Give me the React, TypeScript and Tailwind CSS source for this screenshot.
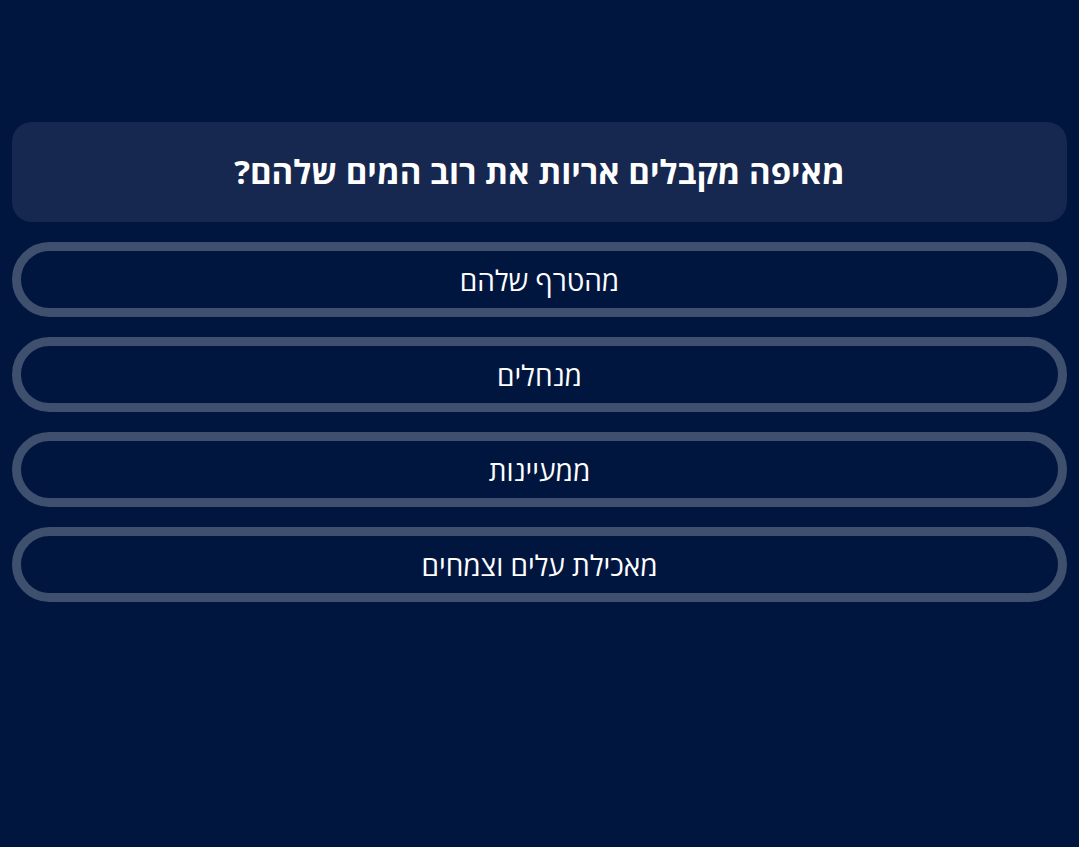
const question = "מאיפה מקבלים אריות את רוב המים שלהם?";

const answers = ["מהטרף שלהם", "מנחלים", "ממעיינות", "מאכילת עלים וצמחים"];

export default function App() {
  return (
    <div
      dir="rtl"
      className="min-h-screen bg-[#01163f] px-3 pt-[122px] text-white"
      style={{ fontFamily: '"Open Sans", "Noto Sans", sans-serif' }}
    >
      <div className="flex h-[100px] items-center justify-center rounded-[20px] bg-[#16284f]">
        <h1 className="text-[33px] font-bold">{question}</h1>
      </div>
      <div className="mt-5 flex flex-col gap-5">
        {answers.map((a, i) => (
          <button
            key={i}
            className="flex h-[75px] items-center justify-center rounded-full border-[9px] border-[#3f506f] bg-transparent text-[28px] text-white"
          >
            {a}
          </button>
        ))}
      </div>
    </div>
  );
}
